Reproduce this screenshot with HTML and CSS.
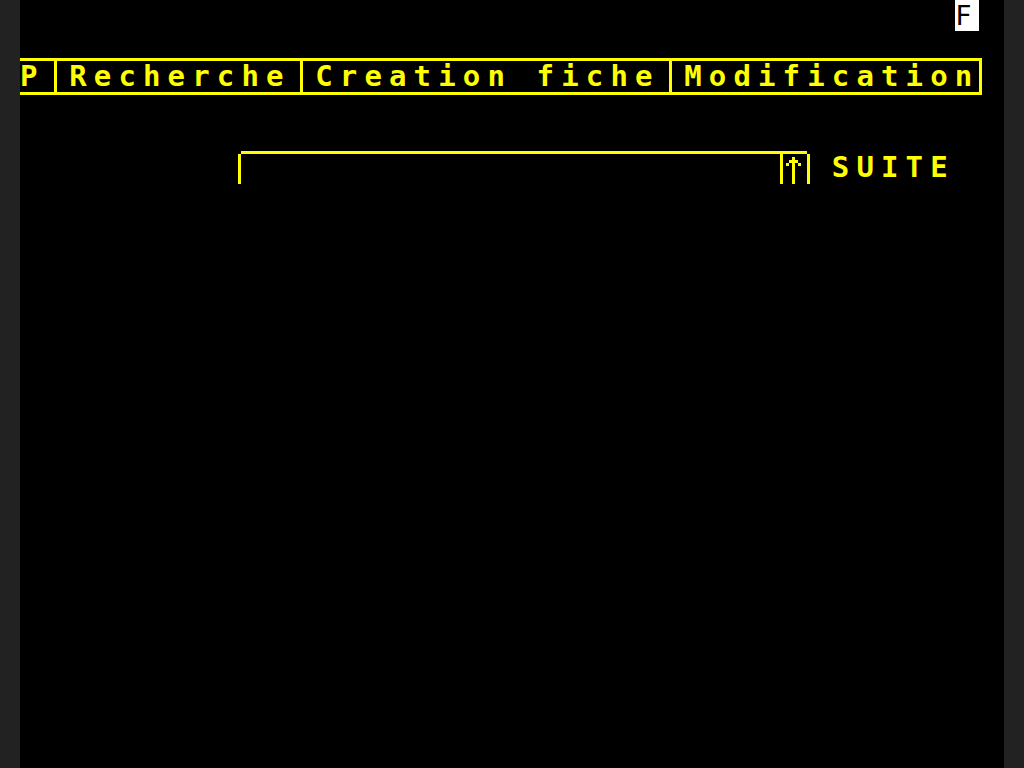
FILE: index.html
```html
<!DOCTYPE html>
<html lang="fr">
<head>
<meta charset="utf-8">
<title>Minitel</title>
<link rel="stylesheet" href="styles.css">
</head>
<body>
<div class="screen">
  <div class="status"><span class="flag">F</span></div>
  <div class="menu">
    <span class="txt">P</span><span class="sep"></span><span class="txt">Recherche</span><span class="sep"></span><span class="txt">Creation fiche</span><span class="sep"></span><span class="txt">Modification</span>
  </div>
  <div class="field">
    <span class="bar"></span>
    <div class="fbox">
      <div class="arrow-cell">
        <svg class="arrow" viewBox="0 0 8 10" width="24" height="30" preserveAspectRatio="none">
          <rect x="3" y="1" width="1" height="9" fill="#ffff00"/>
          <rect x="2" y="2" width="3" height="1" fill="#ffff00"/>
          <rect x="1" y="3" width="1" height="1" fill="#ffff00"/>
          <rect x="5" y="3" width="1" height="1" fill="#ffff00"/>
        </svg>
      </div>
    </div>
    <span class="bar"></span>
    <span class="txt suite">SUITE</span>
  </div>
</div>
</body>
</html>
```

FILE: styles.css
```css
html, body {
  margin: 0;
  padding: 0;
  background: #222222;
}

.screen {
  width: 984px;
  height: 768px;
  margin: 0 20px;
  background: #000000;
  color: #ffff00;
  font-family: "DejaVu Sans Mono", "Liberation Mono", monospace;
  font-weight: bold;
  font-size: 29px;
  overflow: hidden;
}

.txt {
  white-space: pre;
  letter-spacing: 7.14px;
}

.status {
  height: 30.72px;
  padding-left: 934.8px;
  display: flex;
}

.flag {
  width: 24.6px;
  height: 30.72px;
  box-sizing: border-box;
  padding: 0.5px 0 0 0;
  font-size: 27px;
  line-height: 30.2px;
  background: #ffffff;
  color: #000000;
  font-weight: normal;
  text-indent: 0.5px;
}

.menu {
  margin-top: 27px;
  width: 959.4px;
  height: 31px;
  border-top: 3px solid #ffff00;
  border-bottom: 3px solid #ffff00;
  border-right: 3px solid #ffff00;
  display: flex;
  line-height: 31px;
}

.sep {
  width: 24.6px;
  display: flex;
  padding-left: 9.6px;
  box-sizing: border-box;
}

.sep::before {
  content: "";
  width: 3px;
  height: 100%;
  background: #ffff00;
}

.field {
  margin-top: 56.3px;
  padding-left: 218px;
  display: flex;
  align-items: flex-start;
}

.bar {
  width: 3px;
  height: 30px;
  margin-top: 3px;
  background: #ffff00;
}

.fbox {
  width: 566px;
  height: 30px;
  border-top: 3px solid #ffff00;
  display: flex;
  justify-content: flex-end;
}

.arrow-cell {
  width: 24px;
  height: 30px;
  border-left: 3px solid #ffff00;
}

.arrow {
  display: block;
}

.suite {
  margin-left: 21.8px;
  margin-top: 3px;
  line-height: 27px;
}
```
